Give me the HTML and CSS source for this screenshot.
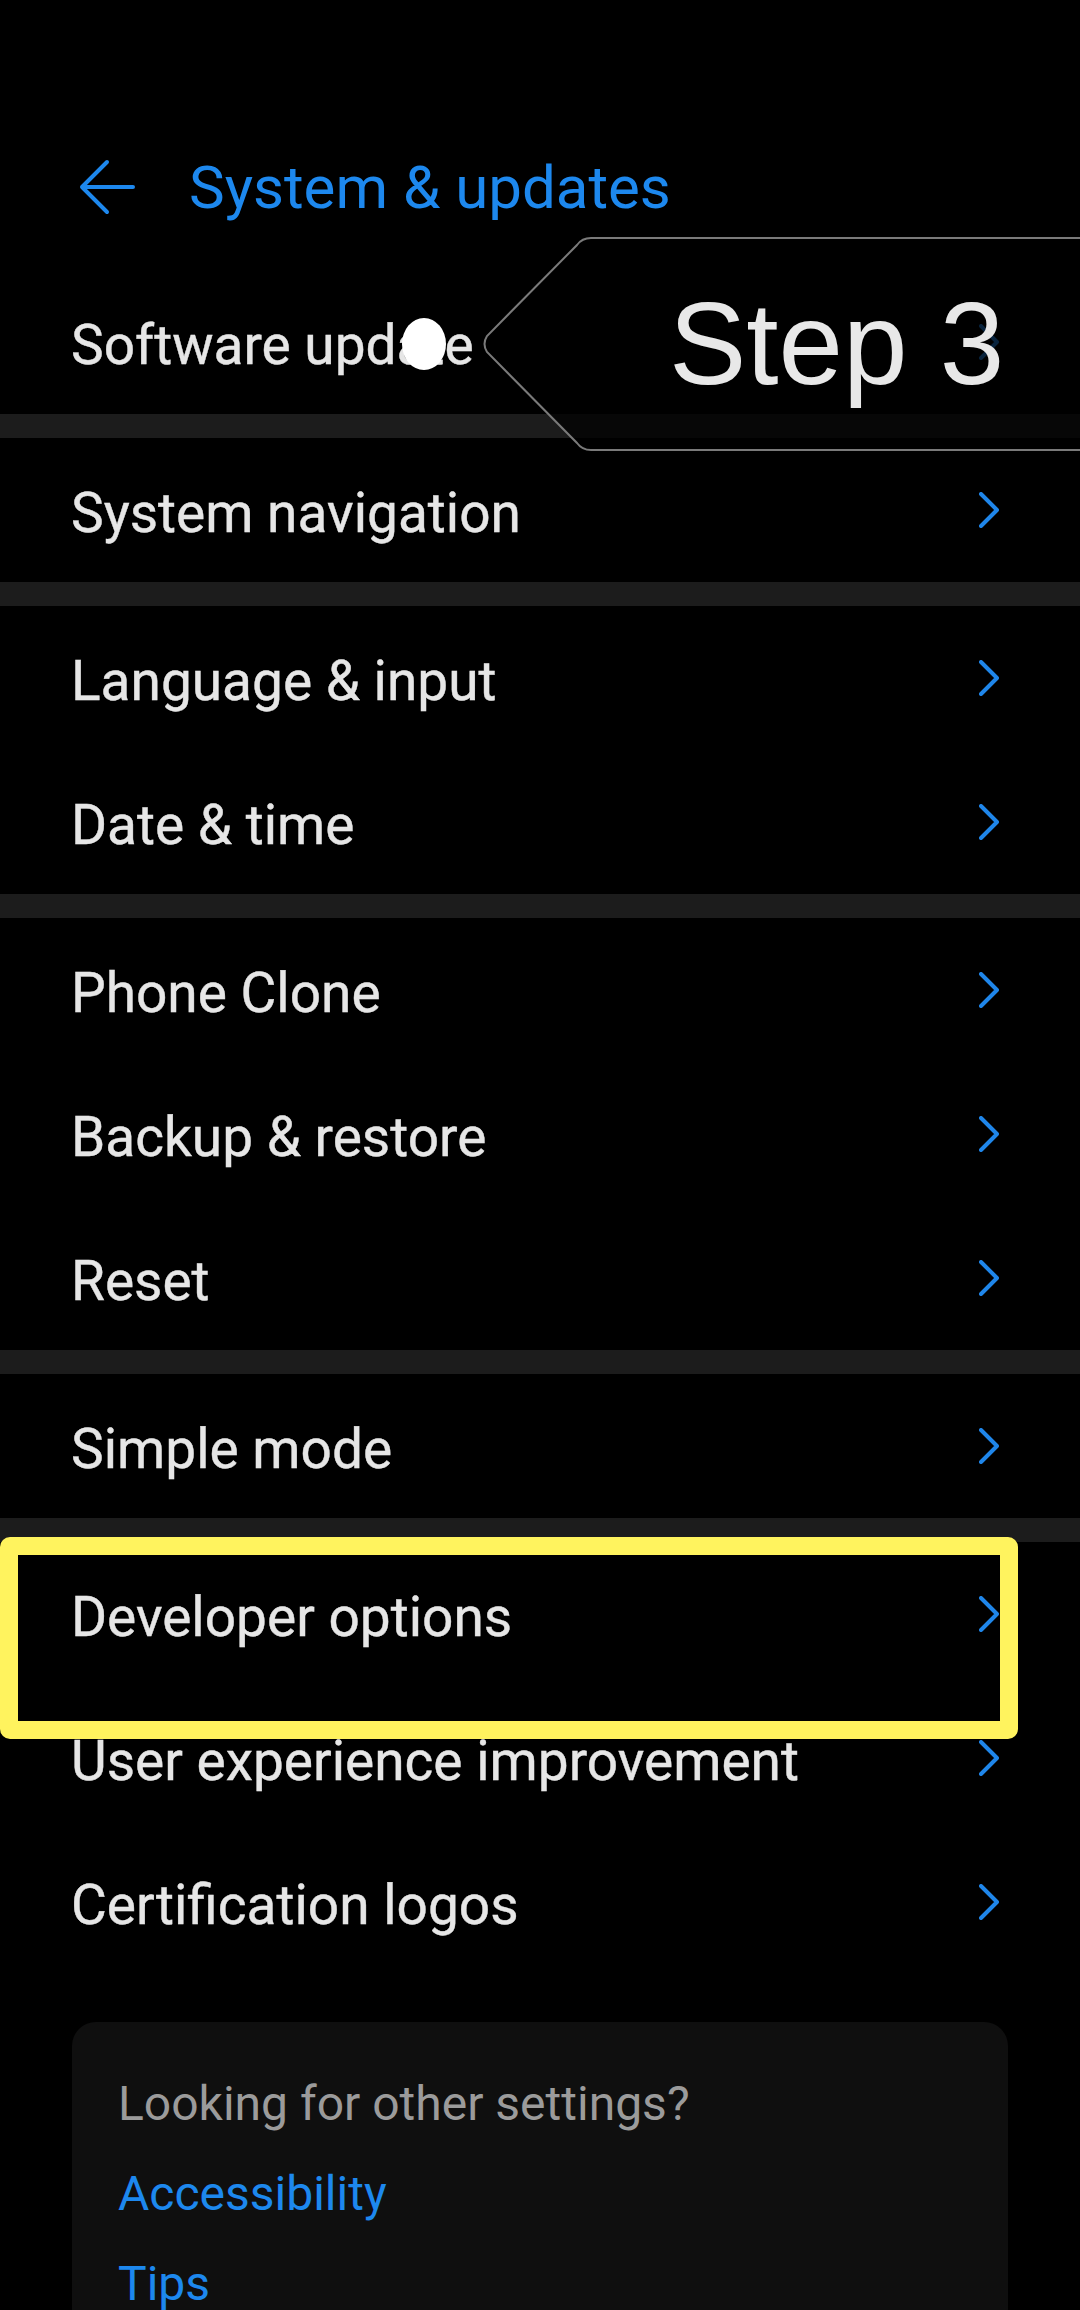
FILE: index.html
```html
<!DOCTYPE html>
<html lang="en">
<head>
    <meta charset="UTF-8">
    <meta name="viewport" content="width=device-width, initial-scale=1.0">
    <title>System &amp; updates</title>
    <link rel="stylesheet" href="styles.css">
</head>
<body>
    <div id="screen">
        <header class="appbar">
            <svg class="back" width="56" height="56" viewBox="0 0 56 56">
                <path d="M54 28H3M28 3L3 28L28 53" fill="none" stroke="#1d88ee" stroke-width="4" stroke-linecap="round" stroke-linejoin="round"/>
            </svg>
            <h1 class="title">System &amp; updates</h1>
        </header>

        <div class="group">
            <div class="row">
                <span class="label">Software update</span>
                <svg class="chevron" width="20" height="36" viewBox="0 0 20 36"><polyline points="2,2 18,18 2,34"/></svg>
                <div class="touch-dot"></div>
                <div class="tip">
                    <svg class="tip-shape" width="620" height="216" viewBox="0 0 620 216">
                        <path d="M640 2H110Q101 2 96 9L6 100Q1 108 6 116L96 207Q101 214 110 214H640" fill="rgba(0,0,0,0.74)" stroke="#7a7a7a" stroke-width="2"/>
                    </svg>
                    <span class="tip-text">Step 3</span>
                </div>
            </div>
        </div>

        <div class="group">
            <div class="row">
                <span class="label">System navigation</span>
                <svg class="chevron" width="20" height="36" viewBox="0 0 20 36"><polyline points="2,2 18,18 2,34"/></svg>
            </div>
        </div>

        <div class="group">
            <div class="row">
                <span class="label">Language &amp; input</span>
                <svg class="chevron" width="20" height="36" viewBox="0 0 20 36"><polyline points="2,2 18,18 2,34"/></svg>
            </div>
            <div class="row">
                <span class="label">Date &amp; time</span>
                <svg class="chevron" width="20" height="36" viewBox="0 0 20 36"><polyline points="2,2 18,18 2,34"/></svg>
            </div>
        </div>

        <div class="group">
            <div class="row">
                <span class="label">Phone Clone</span>
                <svg class="chevron" width="20" height="36" viewBox="0 0 20 36"><polyline points="2,2 18,18 2,34"/></svg>
            </div>
            <div class="row">
                <span class="label">Backup &amp; restore</span>
                <svg class="chevron" width="20" height="36" viewBox="0 0 20 36"><polyline points="2,2 18,18 2,34"/></svg>
            </div>
            <div class="row">
                <span class="label">Reset</span>
                <svg class="chevron" width="20" height="36" viewBox="0 0 20 36"><polyline points="2,2 18,18 2,34"/></svg>
            </div>
        </div>

        <div class="group">
            <div class="row">
                <span class="label">Simple mode</span>
                <svg class="chevron" width="20" height="36" viewBox="0 0 20 36"><polyline points="2,2 18,18 2,34"/></svg>
            </div>
        </div>

        <div class="group">
            <div class="row">
                <span class="label">Developer options</span>
                <svg class="chevron" width="20" height="36" viewBox="0 0 20 36"><polyline points="2,2 18,18 2,34"/></svg>
                <div class="highlight"></div>
            </div>
            <div class="row">
                <span class="label">User experience improvement</span>
                <svg class="chevron" width="20" height="36" viewBox="0 0 20 36"><polyline points="2,2 18,18 2,34"/></svg>
            </div>
            <div class="row">
                <span class="label">Certification logos</span>
                <svg class="chevron" width="20" height="36" viewBox="0 0 20 36"><polyline points="2,2 18,18 2,34"/></svg>
            </div>
        </div>

        <div class="more-card">
            <p class="more-title">Looking for other settings?</p>
            <a class="more-link">Accessibility</a>
            <a class="more-link">Tips</a>
        </div>
    </div>
</body>
</html>
```

FILE: styles.css
```css
html, body {
    margin: 0;
    padding: 0;
    background-color: #000;
}

body {
    width: 1080px;
    height: 2310px;
    overflow: hidden;
    font-family: Roboto, "Noto Sans", sans-serif;
    color: #e6e6e6;
}

#screen {
    width: 1080px;
    overflow: hidden;
}

.appbar {
    display: flex;
    align-items: center;
    height: 100px;
    padding: 137px 0 33px 79px;
    gap: 54px;
}

.back {
    flex: none;
}

.title {
    margin: 0;
    font-size: 60px;
    font-weight: 400;
    color: #1d88ee;
}

.group + .group {
    border-top: 24px solid #1c1c1c;
}

.row {
    position: relative;
    display: flex;
    align-items: center;
    justify-content: space-between;
    height: 144px;
    box-sizing: border-box;
    padding: 6px 81px 0 71px;
}

.label {
    font-size: 55px;
    line-height: 64px;
    -webkit-text-stroke: 0.4px #e6e6e6;
}

.chevron {
    flex: none;
    margin-top: -6px;
    fill: none;
    stroke: #1f86ea;
    stroke-width: 4;
    stroke-linecap: round;
    stroke-linejoin: round;
}

/* step annotation over the first row */
.touch-dot {
    position: absolute;
    left: 402px;
    top: 48px;
    width: 44px;
    height: 52px;
    border-radius: 50%;
    background-color: #fff;
}

.tip {
    position: absolute;
    left: 481px;
    top: -34px;
    width: 620px;
    height: 216px;
    display: flex;
    align-items: center;
}

.tip-shape {
    position: absolute;
    left: 0;
    top: 0;
}

.tip-text {
    position: relative;
    margin-left: 188px;
    font-family: "Liberation Sans", Arial, sans-serif;
    font-size: 116px;
    line-height: 1;
    color: #e8e8e8;
}

.highlight {
    position: absolute;
    left: 0;
    top: -5px;
    width: 1018px;
    height: 202px;
    box-sizing: border-box;
    border: 18px solid #fff35e;
    border-radius: 10px;
}

.more-card {
    margin: 48px 72px 0;
    padding: 37px 46px 60px;
    background-color: #0f0f0f;
    border-radius: 24px 24px 0 0;
}

.more-title,
.more-link {
    display: block;
    margin: 0;
    font-size: 48px;
    line-height: 90px;
}

.more-title {
    color: #9b9b9b;
}

.more-link {
    color: #1d88ee;
}
```
